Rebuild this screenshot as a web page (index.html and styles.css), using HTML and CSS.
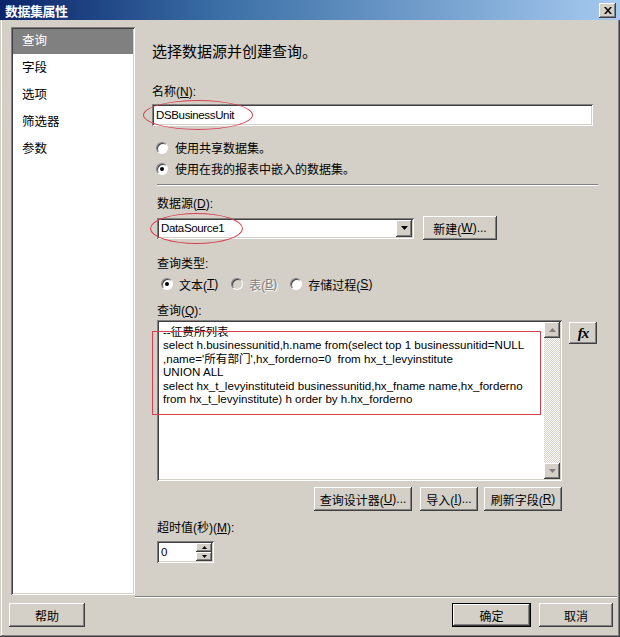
FILE: index.html
```html
<!DOCTYPE html>
<html lang="zh-CN">
<head>
  <meta charset="UTF-8" />
  <title>数据集属性</title>
  <link rel="stylesheet" href="styles.css">
</head>
<body>

  <div class="window">
    <div class="titlebar">
      <span class="title">数据集属性</span>
      <div class="close">
        <svg width="8" height="7" viewBox="0 0 8 7"><path d="M0 0h2l2 2.5 2-2.5h2l-3 3.5 3 3.5h-2l-2-2.5-2 2.5h-2l3-3.5z" fill="#000"/></svg>
      </div>
    </div>

    <div class="main">
      <ul class="nav">
        <li class="active">查询</li>
        <li>字段</li>
        <li>选项</li>
        <li>筛选器</li>
        <li>参数</li>
      </ul>

      <div class="page">
        <h1>选择数据源并创建查询。</h1>

        <div class="label label-name">名称(<u>N</u>):</div>
        <div class="field name-field">
          <span class="value">DSBusinessUnit</span>
          <span class="mark mark-name"></span>
        </div>

        <div class="source-choice">
          <div class="radio-row"><span class="radio"></span>使用共享数据集。</div>
          <div class="radio-row"><span class="radio checked"></span>使用在我的报表中嵌入的数据集。</div>
        </div>

        <div class="separator"></div>

        <div class="section">
          <div class="label label-source">数据源(<u>D</u>):</div>
          <div class="source-row">
            <div class="field combo">
              <span class="value">DataSource1</span>
              <span class="combo-btn">
                <svg width="7" height="4" viewBox="0 0 7 4"><path d="M0 0h7l-3.5 4z" fill="#000"/></svg>
              </span>
              <span class="mark mark-source"></span>
            </div>
            <div class="btn btn-new">新建(<u>W</u>)...</div>
          </div>

          <div class="label label-type">查询类型:</div>
          <div class="type-row">
            <div class="radio-item"><span class="radio checked"></span>文本(<u>T</u>)</div>
            <div class="radio-item disabled"><span class="radio"></span>表(<u>B</u>)</div>
            <div class="radio-item"><span class="radio"></span>存储过程(<u>S</u>)</div>
          </div>

          <div class="label label-query">查询(<u>Q</u>):</div>
          <div class="query-row">
            <div class="field query-box">
              <div class="query-text">--征费所列表
select h.businessunitid,h.name from(select top 1 businessunitid=NULL
,name='所有部门',hx_forderno=0  from hx_t_levyinstitute
UNION ALL
select hx_t_levyinstituteid businessunitid,hx_fname name,hx_forderno
from hx_t_levyinstitute) h order by h.hx_forderno</div>
              <div class="scrollbar">
                <span class="scroll-btn">
                  <svg width="7" height="4" viewBox="0 0 7 4"><path d="M3.5 0l3.5 4h-7z" fill="#808080"/></svg>
                </span>
                <span class="scroll-btn">
                  <svg width="7" height="4" viewBox="0 0 7 4"><path d="M0 0h7l-3.5 4z" fill="#808080"/></svg>
                </span>
              </div>
              <span class="mark-box"></span>
            </div>
            <div class="btn btn-fx">fx</div>
          </div>

          <div class="query-buttons">
            <div class="btn btn-designer">查询设计器(<u>U</u>)...</div>
            <div class="btn btn-import">导入(<u>I</u>)...</div>
            <div class="btn btn-refresh">刷新字段(<u>R</u>)</div>
          </div>

          <div class="label label-timeout">超时值(秒)(<u>M</u>):</div>
          <div class="field spinner">
            <span class="value">0</span>
            <span class="spin">
              <span class="spin-btn"><svg width="5" height="3" viewBox="0 0 5 3"><path d="M2.5 0l2.5 3h-5z" fill="#000"/></svg></span>
              <span class="spin-btn"><svg width="5" height="3" viewBox="0 0 5 3"><path d="M0 0h5l-2.5 3z" fill="#000"/></svg></span>
            </span>
          </div>
        </div>
      </div>
    </div>

    <div class="footer">
      <div class="btn btn-help">帮助</div>
      <div class="footer-right">
        <div class="btn btn-ok">确定</div>
        <div class="btn btn-cancel">取消</div>
      </div>
    </div>
  </div>

</body>
</html>
```

FILE: styles.css
```css
* {
  box-sizing: border-box;
  margin: 0;
  padding: 0;
}
body {
  font-family: "Liberation Sans", "Noto Sans CJK SC", sans-serif;
  font-size: 12px;
  color: #000;
  background-color: #d4d0c8;
}
u {
  text-underline-offset: 1px;
}
.window {
  width: 620px;
  height: 637px;
  background-color: #d4d0c8;
  padding: 0 3px 3px 3px;
  box-shadow: inset -1px -1px #404040, inset 1px 1px #d4d0c8, inset -2px -2px #808080, inset 2px 2px #fff;
  display: flex;
  flex-direction: column;
}
.titlebar {
  height: 20px;
  margin: 0 -3px;
  padding: 0 4px 0 5px;
  background: linear-gradient(to right, #0a246a, #3a6ea5 35%, #a6caf0);
  display: flex;
  align-items: center;
  justify-content: space-between;
}
.title {
  color: #fff;
  font-weight: bold;
  font-size: 13px;
  letter-spacing: -0.5px;
}
.close {
  width: 17px;
  height: 15px;
  background-color: #d4d0c8;
  box-shadow: inset -1px -1px #404040, inset 1px 1px #fff, inset -2px -2px #808080;
  display: flex;
  align-items: center;
  justify-content: center;
}

/* main area */
.main {
  display: flex;
  padding: 7px 0 0 8px;
  height: 577px;
}
.nav {
  list-style: none;
  width: 124px;
  height: 568px;
  background-color: #fff;
  padding: 2px 2px 0 2px;
  box-shadow: inset 1px 1px #808080, inset -1px -1px #fff, inset 2px 2px #404040, inset -2px -2px #d4d0c8;
}
.nav li {
  height: 27px;
  line-height: 25px;
  padding-left: 9px;
  font-size: 12.5px;
}
.nav li.active {
  background-color: #808080;
  color: #fff;
  height: 25px;
  margin-bottom: 2px;
}
.page {
  flex: 1;
  padding-left: 17px;
  position: relative;
  border-bottom: 1px solid #808080;
  box-shadow: 0 1px #fff;
  height: 570px;
}
.page h1 {
  font-size: 15px;
  font-weight: normal;
  line-height: 20px;
  height: 20px;
  margin-top: 15px;
}
.label {
  height: 16px;
  line-height: 16px;
}
.label-name {
  margin-top: 22px;
}
.field {
  background-color: #fff;
  box-shadow: inset 1px 1px #808080, inset -1px -1px #fff, inset 2px 2px #404040, inset -2px -2px #d4d0c8;
  position: relative;
  display: flex;
  align-items: center;
  padding-left: 4px;
}
.field .value {
  font-size: 11.5px;
  letter-spacing: -0.35px;
}
.name-field {
  margin-top: 4px;
  width: 441px;
  height: 22px;
}
.mark {
  position: absolute;
  border: 1px solid #d9404f;
  border-radius: 50%;
  pointer-events: none;
}
.mark-name {
  left: -9px;
  top: -4px;
  width: 110px;
  height: 30px;
}
.source-choice {
  margin-top: 11px;
  padding-left: 4px;
}
.radio-row {
  height: 21px;
  display: flex;
  align-items: center;
}
.radio {
  width: 12px;
  height: 12px;
  border-radius: 50%;
  background-color: #fff;
  border: 1px solid #808080;
  border-right-color: #fff;
  border-bottom-color: #fff;
  box-shadow: inset 1px 1px #404040;
  margin-right: 7px;
  position: relative;
  flex: none;
}
.radio.checked::after {
  content: "";
  position: absolute;
  left: 3px;
  top: 3px;
  width: 4px;
  height: 4px;
  border-radius: 50%;
  background-color: #000;
}
.separator {
  margin: 5px 0 0 5px;
  width: 441px;
  height: 2px;
  border-top: 1px solid #808080;
  border-bottom: 1px solid #fff;
}
.section {
  padding-left: 5px;
}
.label-source {
  margin-top: 10px;
}
.source-row {
  margin-top: 4px;
  height: 24px;
  display: flex;
  align-items: center;
}
.combo {
  width: 257px;
  height: 21px;
}
.combo-btn {
  position: absolute;
  right: 2px;
  top: 2px;
  width: 16px;
  height: 17px;
  background-color: #d4d0c8;
  box-shadow: inset -1px -1px #404040, inset 1px 1px #fff, inset -2px -2px #808080;
  display: flex;
  align-items: center;
  justify-content: center;
}
.mark-source {
  left: -7px;
  top: -5px;
  width: 93px;
  height: 31px;
}
.btn {
  background-color: #d4d0c8;
  height: 24px;
  display: flex;
  align-items: center;
  justify-content: center;
  box-shadow: inset -1px -1px #404040, inset 1px 1px #fff, inset -2px -2px #808080, inset 2px 2px #d4d0c8;
}
.btn-new {
  margin-left: 9px;
  width: 74px;
}
.label-type {
  margin-top: 16px;
}
.type-row {
  margin-top: 2px;
  height: 20px;
  padding-left: 4px;
  display: flex;
  align-items: center;
  gap: 13px;
}
.radio-item {
  display: flex;
  align-items: center;
}
.radio-item .radio {
  margin-right: 6px;
}
.radio-item.disabled {
  color: #808080;
  text-shadow: 1px 1px #fff;
}
.radio-item.disabled .radio {
  background-color: #d4d0c8;
}
.label-query {
  margin-top: 9px;
}
.query-row {
  margin-top: 1px;
  display: flex;
  align-items: flex-start;
}
.query-box {
  width: 405px;
  height: 161px;
  align-items: stretch;
  padding: 2px 2px 2px 6px;
}
.query-text {
  flex: 1;
  white-space: pre;
  line-height: 13.4px;
  padding-top: 3px;
  font-size: 11.6px;
}
.scrollbar {
  width: 16px;
  background: repeating-conic-gradient(#d4d0c8 0 25%, #fff 0 50%) 0 0 / 2px 2px;
  display: flex;
  flex-direction: column;
  justify-content: space-between;
}
.scroll-btn {
  height: 16px;
  background-color: #d4d0c8;
  box-shadow: inset -1px -1px #404040, inset 1px 1px #fff, inset -2px -2px #808080;
  display: flex;
  align-items: center;
  justify-content: center;
}
.mark-box {
  position: absolute;
  left: -5px;
  top: 11px;
  width: 389px;
  height: 84px;
  border: 1px solid #d9404f;
}
.btn-fx {
  margin: 2px 0 0 7px;
  width: 28px;
  height: 22px;
  font-family: "Liberation Serif", serif;
  font-style: italic;
  font-weight: bold;
  font-size: 15px;
  letter-spacing: -1px;
}
.query-buttons {
  margin-top: 6px;
  width: 405px;
  height: 24px;
  display: flex;
  justify-content: flex-end;
}
.btn-designer {
  width: 98px;
}
.btn-import {
  width: 58px;
  margin-left: 8px;
}
.btn-refresh {
  width: 78px;
  margin-left: 6px;
}
.label-timeout {
  margin-top: 9px;
}
.spinner {
  margin-top: 5px;
  width: 57px;
  height: 22px;
}
.spin {
  position: absolute;
  right: 2px;
  top: 2px;
  bottom: 2px;
  width: 16px;
  display: flex;
  flex-direction: column;
}
.spin-btn {
  flex: 1;
  background-color: #d4d0c8;
  box-shadow: inset -1px -1px #404040, inset 1px 1px #fff, inset -2px -2px #808080;
  display: flex;
  align-items: center;
  justify-content: center;
}

/* footer */
.footer {
  display: flex;
  justify-content: space-between;
  padding: 6px 4px 0 6px;
}
.btn-help {
  width: 76px;
}
.footer-right {
  display: flex;
  gap: 8px;
}
.btn-ok {
  width: 79px;
  box-shadow: inset 0 0 0 1px #000, inset -2px -2px #404040, inset 2px 2px #fff, inset -3px -3px #808080;
}
.btn-cancel {
  width: 74px;
}
```
